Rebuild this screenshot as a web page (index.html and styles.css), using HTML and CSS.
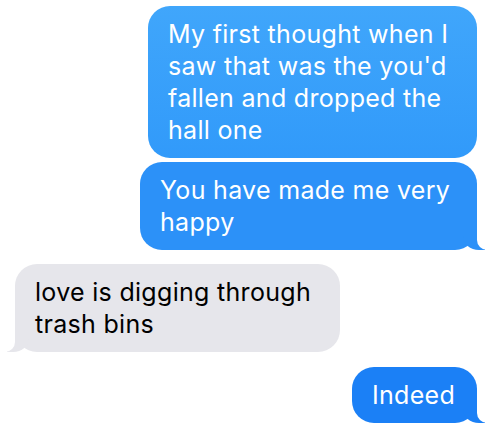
FILE: index.html
```html
<!DOCTYPE html>
<html lang="en">
<head>
  <meta charset="UTF-8">
  <meta name="viewport" content="width=device-width, initial-scale=1.0">
  <title>Messages</title>
  <link rel="stylesheet" href="styles.css">
</head>
<body>
  <div class="thread">
    <div class="bubble sent first">My first thought when I saw that was the you'd fallen and dropped the hall one</div>
    <div class="bubble sent tail mid">You have made me very happy</div>
    <div class="bubble received tail">love is digging through trash bins</div>
    <div class="bubble sent tail last">Indeed</div>
  </div>
</body>
</html>
```
FILE: styles.css
```css
body {
  margin: 0;
  background: #fff;
  font-family: Inter, "Noto Sans", sans-serif;
}
.thread {
  display: flex;
  flex-direction: column;
  padding: 6px 23px 0 15px;
}
.bubble {
  position: relative;
  max-width: 289px;
  padding: 12px 20px 12px 20px;
  border-radius: 22px;
  font-size: 25px;
  line-height: 32px;
  letter-spacing: 0.3px;
}
.sent {
  align-self: flex-end;
  color: #fff;
  background: #2c91f8;
}
.received {
  align-self: flex-start;
  max-width: 285px;
  color: #000;
  background: #e6e6eb;
  margin-top: 14px;
}
.first {
  background: linear-gradient(#40a6fb, #319afa);
}
.mid {
  max-width: 297px;
  margin-top: 4px;
}
.last {
  margin-top: 15px;
  padding-right: 22px;
  background: #1b80f6;
}
/* the little hook under the last bubble of a group */
.tail::before,
.tail::after {
  content: "";
  position: absolute;
  bottom: 0;
  height: 22px;
}
.sent.tail::before {
  right: -8px;
  width: 22px;
  background: inherit;
  border-bottom-left-radius: 16px 14px;
}
.sent.tail::after {
  right: -26px;
  width: 26px;
  background: #fff;
  border-bottom-left-radius: 10px;
}
.received.tail::before {
  left: -8px;
  width: 22px;
  background: inherit;
  border-bottom-right-radius: 16px 14px;
}
.received.tail::after {
  left: -26px;
  width: 26px;
  background: #fff;
  border-bottom-right-radius: 10px;
}
```
